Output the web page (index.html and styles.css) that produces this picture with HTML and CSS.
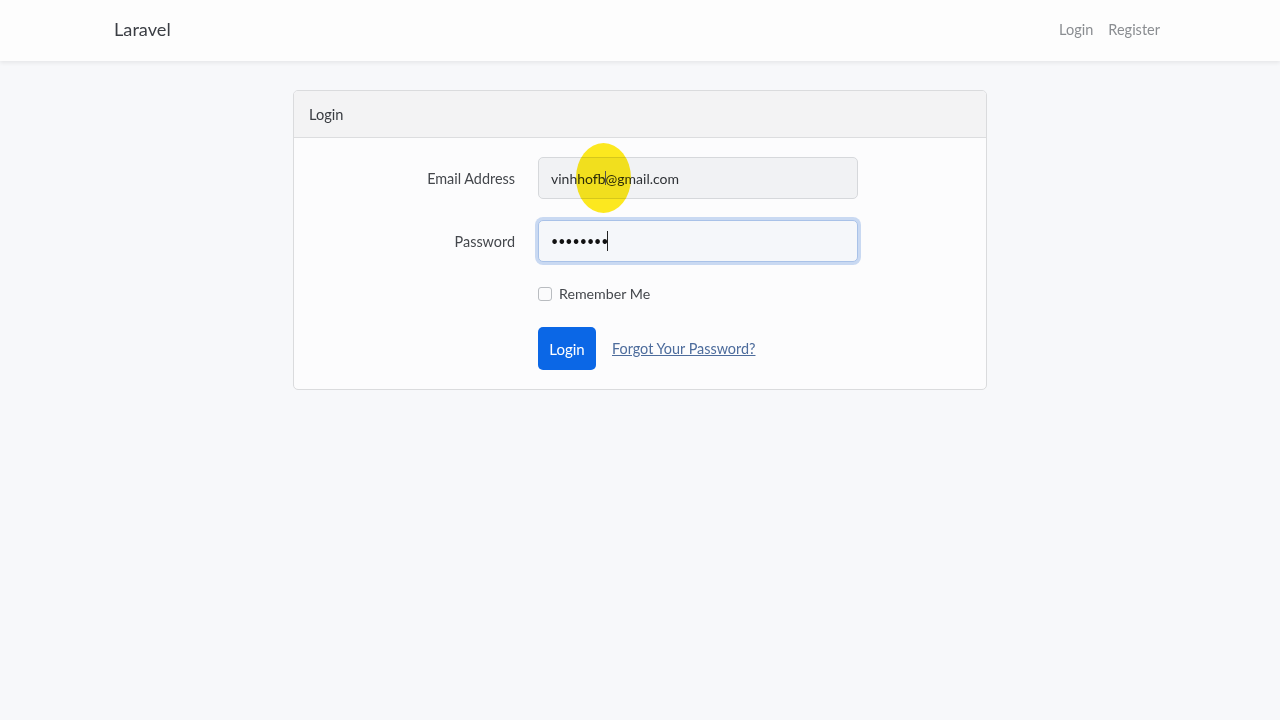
FILE: index.html
```html
<!DOCTYPE html>
<html lang="en">
<head>
<meta charset="utf-8">
<title>Laravel</title>
<link rel="stylesheet" href="styles.css">
</head>
<body>
<nav class="navbar">
  <a class="brand" href="#">Laravel</a>
  <div class="nav-links">
    <a href="#">Login</a>
    <a href="#">Register</a>
  </div>
</nav>
<main class="main">
  <div class="card">
    <div class="card-header">Login</div>
    <div class="card-body">
      <div class="form-row">
        <label class="label" for="email">Email Address</label>
        <div class="field">
          <input id="email" class="input autofill" type="text" value="vinhhofb@gmail.com">
          <span class="highlight"></span>
          <span class="ibeam"></span>
        </div>
      </div>
      <div class="form-row row-password">
        <label class="label" for="password">Password</label>
        <div class="field">
          <input id="password" class="input focus" type="password" value="12345678">
          <span class="caret"></span>
        </div>
      </div>
      <div class="form-row row-check">
        <span></span>
        <label class="check"><span class="box"></span>Remember Me</label>
      </div>
      <div class="form-row row-actions">
        <span></span>
        <div class="actions">
          <button class="btn" type="button">Login</button>
          <a class="forgot" href="#">Forgot Your Password?</a>
        </div>
      </div>
    </div>
  </div>
</main>
</body>
</html>
```
FILE: styles.css
```css
* { box-sizing: border-box; }
html, body { margin: 0; padding: 0; }
body {
  background: #f7f8fa;
  font-family: Lato, "Noto Sans", "Liberation Sans", sans-serif;
  font-size: 14.4px;
  color: #3a3d42;
  height: 720px;
  overflow: hidden;
}
.navbar {
  background: #fdfdfd;
  height: 61px;
  box-shadow: 0 2px 4px rgba(0,0,0,0.07);
  position: relative;
  display: flex;
  align-items: center;
  justify-content: space-between;
  padding: 0 120px 3px 114px;
}
.brand {
  color: #3b3e44;
  text-decoration: none;
  font-size: 18.2px;
}
.nav-links { display: flex; gap: 15px; }
.nav-links a {
  color: #8a8d91;
  text-decoration: none;
  font-size: 14.5px;
}
.main { padding-top: 29px; }
.card {
  width: 694px;
  margin: 0 auto;
  background: #fcfcfd;
  border: 1px solid #dadbdd;
  border-radius: 5px;
  overflow: hidden;
}
.card-header {
  height: 47px;
  background: #f3f3f4;
  border-bottom: 1px solid #dcdddf;
  padding: 0 15px;
  display: flex;
  align-items: center;
  font-size: 14.6px;
  color: #3a3d42;
}
.card-body { padding: 19px 16px 19px 16px; }
.form-row {
  display: grid;
  grid-template-columns: 205px 320px;
  column-gap: 23px;
  align-items: center;
}
.label { text-align: right; color: #44474c; }
.field { position: relative; }
.input {
  display: block;
  width: 320px;
  height: 42px;
  border: 1px solid #d6d8db;
  border-radius: 5px;
  padding: 0 12px;
  font: inherit;
  font-size: 14px;
  color: #2e3135;
  outline: none;
}
.autofill { background: #f1f2f4; }
.focus {
  background: #f5f7fa;
  border-color: #a9c2e8;
  box-shadow: 0 0 0 3px #c9d9f2;
  font-size: 12.4px;
  color: #111;
}
.row-password { margin-top: 21px; }
.caret {
  position: absolute;
  left: 69px;
  top: 11px;
  width: 1px;
  height: 20px;
  background: #222;
}
.highlight {
  position: absolute;
  left: 38px;
  top: -14px;
  width: 55px;
  height: 70px;
  border-radius: 50%;
  background: rgba(255, 232, 0, 0.88);
  mix-blend-mode: multiply;
}
.ibeam {
  position: absolute;
  left: 67px;
  top: 14px;
  width: 1px;
  height: 14px;
  background: #555;
}
.row-check { margin-top: 23px; }
.check {
  display: flex;
  align-items: center;
  gap: 7px;
  color: #44474c;
  font-size: 14.2px;
}
.box {
  width: 14px;
  height: 14px;
  border: 1px solid #b9bcc0;
  border-radius: 3px;
  background: #fbfbfc;
}
.row-actions { margin-top: 25px; }
.actions { display: flex; align-items: center; gap: 16px; }
.btn {
  width: 58px;
  height: 43px;
  background: #0b67e6;
  color: #fff;
  border: none;
  border-radius: 5px;
  font: inherit;
  font-size: 15px;
  padding: 0;
}
.forgot {
  color: #4d6c9c;
  text-decoration: underline;
  font-size: 14.4px;
}
```
